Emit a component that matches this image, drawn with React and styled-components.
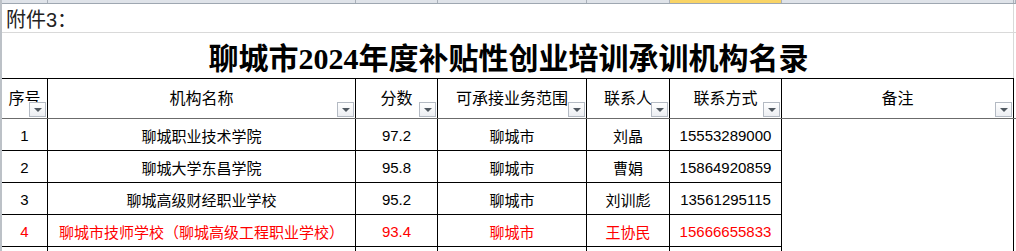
import React from "react"
import styled, { createGlobalStyle } from "styled-components"

const COLS = "46px 308px 82px 149px 83px 112px 232px"
const GRID = "#d9d9d9"

const GlobalStyle = createGlobalStyle`
  body {
    margin: 0;
    background: #fff;
    font-family: "Liberation Sans", "Noto Sans CJK SC", sans-serif;
  }
`

const Sheet = styled.div`
  width: 1016px;
  height: 251px;
  overflow: hidden;
  border-left: 2px solid #bcc1c7;
  box-sizing: border-box;
`

const ColumnStrip = styled.div`
  display: grid;
  grid-template-columns: ${COLS} 1fr;
  height: 3px;
  background: #dfe3e9;
  border-bottom: 1px solid #9ea7b1;
`

const StripCell = styled.div`
  border-right: 1px solid #aab1ba;
  background: ${props => (props.$active ? "#f9d466" : "transparent")};
`

const SheetRow = styled.div`
  display: flex;
  height: ${props => props.$height}px;
  border-bottom: ${props => (props.$line ? `1px solid ${GRID}` : "none")};
`

const MergedCell = styled.div`
  width: 1012px;
  box-sizing: border-box;
  border-right: 1px solid ${GRID};
  display: flex;
  align-items: center;
  justify-content: ${props => (props.$center ? "center" : "flex-start")};
`

const Note = styled.span`
  padding-left: 4px;
  font-size: 20px;
  color: #222;
`

const Title = styled.h1`
  margin: 0;
  padding-left: 2px;
  font-family: "Liberation Serif", "Noto Sans CJK SC", serif;
  font-size: 30px;
  font-weight: 700;
  color: #000;
`

const HeadRow = styled.div`
  display: grid;
  grid-template-columns: ${COLS} 1fr;
  border-bottom: 1px solid #6b6b6b;
`

const HeadCell = styled.div`
  position: relative;
  height: 40px;
  box-sizing: border-box;
  border-top: 1px solid #000;
  border-right: 1px solid #000;
  display: flex;
  align-items: center;
  justify-content: center;
  padding-bottom: 4px;
  font-size: 16px;
  color: #000;
  white-space: nowrap;
`

const FilterButton = styled.span`
  position: absolute;
  right: 1px;
  bottom: 1px;
  width: 17px;
  height: 15px;
  box-sizing: border-box;
  border: 1px solid #b4bac3;
  background: linear-gradient(#ffffff, #eceef2);
  &::after {
    content: "";
    position: absolute;
    left: 4px;
    top: 5px;
    border-left: 4px solid transparent;
    border-right: 4px solid transparent;
    border-top: 4px solid #505860;
  }
`

const Body = styled.div`
  display: grid;
  grid-template-columns: ${COLS};
  grid-auto-rows: 32px;
`

const Cell = styled.div`
  box-sizing: border-box;
  border-right: 1px solid #000;
  border-bottom: 1px solid #000;
  display: flex;
  align-items: center;
  justify-content: center;
  padding-top: 2px;
  font-size: 15px;
  color: ${props => (props.$red ? "#ff0000" : "#000")};
  white-space: nowrap;
`

const RemarkCell = styled.div`
  grid-column: 7;
  grid-row: 1 / span 5;
  border-right: 1px solid #000;
`

const headers = ["序号", "机构名称", "分数", "可承接业务范围", "联系人", "联系方式", "备注"]

const rows = [
  ["1", "聊城职业技术学院", "97.2", "聊城市", "刘晶", "15553289000"],
  ["2", "聊城大学东昌学院", "95.8", "聊城市", "曹娟", "15864920859"],
  ["3", "聊城高级财经职业学校", "95.2", "聊城市", "刘训彪", "13561295115"],
  ["4", "聊城市技师学校（聊城高级工程职业学校）", "93.4", "聊城市", "王协民", "15666655833", true],
  ["", "", "", "", "", ""],
]

const App = () => {
  return (
    <Sheet>
      <GlobalStyle />
      <ColumnStrip>
        {[0, 1, 2, 3, 4, 5, 6].map(i => (
          <StripCell key={i} $active={i === 5} />
        ))}
        <StripCell />
      </ColumnStrip>

      <SheetRow $height={28} $line>
        <MergedCell>
          <Note>附件3：</Note>
        </MergedCell>
      </SheetRow>

      <SheetRow $height={45}>
        <MergedCell $center>
          <Title>聊城市2024年度补贴性创业培训承训机构名录</Title>
        </MergedCell>
      </SheetRow>

      <HeadRow>
        {headers.map(h => (
          <HeadCell key={h}>
            {h}
            <FilterButton />
          </HeadCell>
        ))}
      </HeadRow>

      <Body>
        {rows.map((row, r) =>
          row.slice(0, 6).map((value, c) => (
            <Cell key={`${r}-${c}`} $red={row[6]}>
              {value}
            </Cell>
          ))
        )}
        <RemarkCell />
      </Body>
    </Sheet>
  )
}

export default App
